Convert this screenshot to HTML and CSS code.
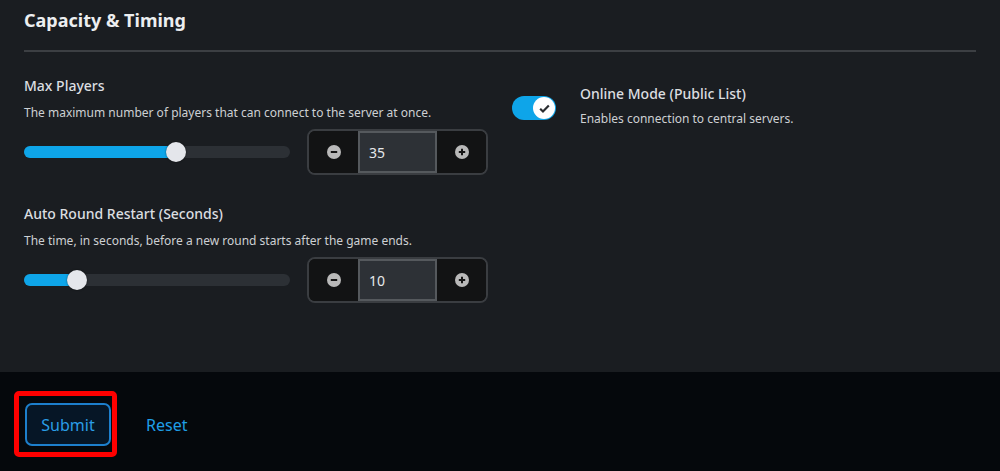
FILE: index.html
```html
<!DOCTYPE html>
<html lang="en">
<head>
    <meta charset="UTF-8">
    <meta name="viewport" content="width=device-width, initial-scale=1.0">
    <title>Server Settings</title>
    <link rel="stylesheet" href="styles.css">
</head>
<body>
    <div class="section">
        <h2 class="section-title">Capacity &amp; Timing</h2>
        <div class="divider"></div>

        <div class="columns">
            <div class="col">
                <div class="field">
                    <div class="field-label">Max Players</div>
                    <div class="field-desc">The maximum number of players that can connect to the server at once.</div>
                    <div class="control-row">
                        <div class="slider">
                            <div class="slider-fill" style="width: 57%"></div>
                            <div class="slider-thumb" style="left: 57%"></div>
                        </div>
                        <div class="stepper">
                            <button class="step-btn" type="button" aria-label="Decrease">
                                <svg width="14" height="14" viewBox="0 0 14 14"><circle cx="7" cy="7" r="7" fill="#b9b9b9"/><path d="M3.8 7h6.4" stroke="#151515" stroke-width="2"/></svg>
                            </button>
                            <input class="step-input" type="text" value="35">
                            <button class="step-btn" type="button" aria-label="Increase">
                                <svg width="14" height="14" viewBox="0 0 14 14"><circle cx="7" cy="7" r="7" fill="#b9b9b9"/><path d="M3.8 7h6.4M7 3.8v6.4" stroke="#151515" stroke-width="2"/></svg>
                            </button>
                        </div>
                    </div>
                </div>

                <div class="field">
                    <div class="field-label">Auto Round Restart (Seconds)</div>
                    <div class="field-desc">The time, in seconds, before a new round starts after the game ends.</div>
                    <div class="control-row">
                        <div class="slider">
                            <div class="slider-fill" style="width: 20%"></div>
                            <div class="slider-thumb" style="left: 20%"></div>
                        </div>
                        <div class="stepper">
                            <button class="step-btn" type="button" aria-label="Decrease">
                                <svg width="14" height="14" viewBox="0 0 14 14"><circle cx="7" cy="7" r="7" fill="#b9b9b9"/><path d="M3.8 7h6.4" stroke="#151515" stroke-width="2"/></svg>
                            </button>
                            <input class="step-input" type="text" value="10">
                            <button class="step-btn" type="button" aria-label="Increase">
                                <svg width="14" height="14" viewBox="0 0 14 14"><circle cx="7" cy="7" r="7" fill="#b9b9b9"/><path d="M3.8 7h6.4M7 3.8v6.4" stroke="#151515" stroke-width="2"/></svg>
                            </button>
                        </div>
                    </div>
                </div>
            </div>

            <div class="col col-right">
                <div class="toggle-field">
                    <div class="toggle on">
                        <span class="toggle-thumb">
                            <svg width="13" height="13" viewBox="0 0 12 12"><path d="M2 6.2l2.6 2.6 5.4-5.6" fill="none" stroke="#2a2d31" stroke-width="2"/></svg>
                        </span>
                    </div>
                    <div>
                        <div class="field-label">Online Mode (Public List)</div>
                        <div class="field-desc">Enables connection to central servers.</div>
                    </div>
                </div>
            </div>
        </div>
    </div>

    <div class="footer">
        <span class="highlight">
            <button class="btn-submit" type="submit">Submit</button>
        </span>
        <a class="link-reset" href="#">Reset</a>
    </div>
</body>
</html>
```

FILE: styles.css
```css
/* Server settings form */
body {
    font-family: "Noto Sans", "Open Sans", sans-serif;
    margin: 0;
    padding: 0;
    background-color: #1a1d21;
    color: #d6d8da;
}

.section {
    height: 372px;
    padding: 8px 24px 0;
    box-sizing: border-box;
}

.section-title {
    margin: 0;
    font-size: 18px;
    line-height: 24px;
    font-weight: bold;
    color: #eceef0;
}

.divider {
    height: 2px;
    margin-top: 18px;
    background-color: #3c3f43;
}

.columns {
    display: grid;
    grid-template-columns: 1fr 1fr;
    gap: 24px;
    margin-top: 24px;
}

.field {
    margin-bottom: 29px;
}

.field-label {
    font-size: 14px;
    line-height: 20px;
    font-weight: 500;
    color: #dcdee0;
}

.field-desc {
    margin-top: 9px;
    font-size: 12px;
    line-height: 16px;
    color: #cdd0d3;
}

.control-row {
    display: flex;
    align-items: center;
    gap: 17px;
    margin-top: 8px;
}

.slider {
    position: relative;
    flex: 1;
    height: 12px;
    border-radius: 6px;
    background-color: #2c3035;
}

.slider-fill {
    height: 100%;
    border-radius: 6px;
    background-color: #0ea5e9;
}

.slider-thumb {
    position: absolute;
    top: 50%;
    width: 20px;
    height: 20px;
    margin: -10px 0 0 -10px;
    border-radius: 50%;
    background-color: #e4e6eb;
    box-shadow: 0 0 2px rgba(0, 0, 0, 0.6);
}

.stepper {
    display: flex;
    width: 181px;
    height: 46px;
    border: 2px solid #3a3d41;
    border-radius: 8px;
    box-sizing: border-box;
    overflow: hidden;
    background-color: #121314;
}

.step-btn {
    display: flex;
    align-items: center;
    justify-content: center;
    width: 49px;
    padding: 0;
    border: none;
    background-color: #121314;
    cursor: pointer;
}

.step-input {
    width: 79px;
    padding: 0 0 0 9px;
    border: 2px solid #55595d;
    box-sizing: border-box;
    background-color: #2d3136;
    color: #e6e8ea;
    font-family: inherit;
    font-size: 14px;
    outline: none;
}

.col-right {
    padding-top: 8px;
}

.toggle-field {
    display: flex;
    align-items: flex-start;
    gap: 24px;
}

.toggle {
    display: flex;
    align-items: center;
    justify-content: flex-end;
    width: 44px;
    height: 24px;
    margin-top: 12px;
    padding: 0 1px;
    border-radius: 12px;
    box-sizing: border-box;
    background-color: #0ea5e9;
}

.toggle-thumb {
    display: flex;
    align-items: center;
    justify-content: center;
    width: 22px;
    height: 22px;
    border-radius: 50%;
    background-color: #ffffff;
}

.toggle-field .field-desc {
    margin-top: 7px;
}

.footer {
    display: flex;
    align-items: center;
    gap: 35px;
    height: 99px;
    padding: 6px 0 0 25px;
    box-sizing: border-box;
    background-color: #05080c;
}

.highlight {
    position: relative;
    display: inline-flex;
}

.highlight::after {
    content: "";
    position: absolute;
    top: -12px;
    left: -11px;
    right: -6px;
    bottom: -11px;
    border: 5px solid #ff0000;
    border-radius: 5px;
}

.btn-submit {
    height: 43px;
    width: 86px;
    padding: 0;
    border: 2px solid #1d7fcc;
    border-radius: 7px;
    background-color: #061626;
    color: #2a9de6;
    font-family: inherit;
    font-size: 16px;
    cursor: pointer;
}

.link-reset {
    color: #1f9ee6;
    font-size: 16px;
    text-decoration: none;
}
```
